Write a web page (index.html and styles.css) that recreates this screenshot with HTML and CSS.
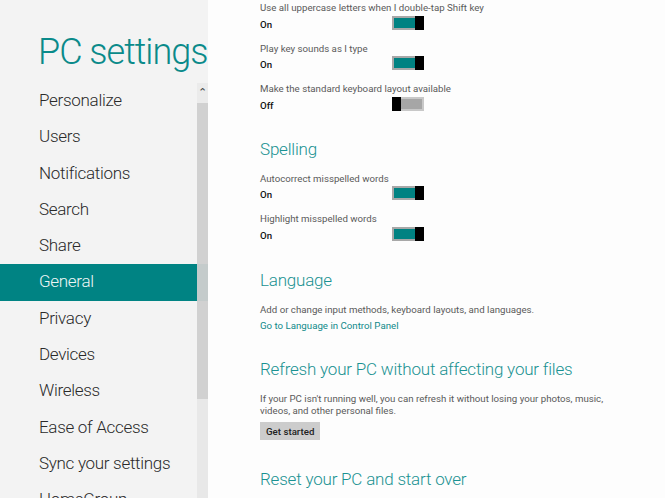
FILE: index.html
```html
<!DOCTYPE html>
<html lang="en">
<head>
    <meta charset="UTF-8">
    <meta name="viewport" content="width=device-width, initial-scale=1.0">
    <title>PC settings</title>
    <link rel="stylesheet" href="styles.css">
</head>
<body>
    <div class="sidebar">
        <h1 class="title">PC settings</h1>
        <div class="nav-wrap">
            <ul class="nav">
                <li>Personalize</li>
                <li>Users</li>
                <li>Notifications</li>
                <li>Search</li>
                <li>Share</li>
                <li class="selected">General</li>
                <li>Privacy</li>
                <li>Devices</li>
                <li>Wireless</li>
                <li>Ease of Access</li>
                <li>Sync your settings</li>
                <li>HomeGroup</li>
            </ul>
            <div class="scrollbar">
                <div class="arrow up">&#8963;</div>
                <div class="thumb"></div>
                <div class="track"></div>
                <div class="arrow down">&#8964;</div>
            </div>
        </div>
    </div>
    <div class="content">
        <div class="section settings">
            <div class="setting">
                <div class="setting-label">Use all uppercase letters when I double-tap Shift key</div>
                <div class="setting-row"><span class="state">On</span><span class="toggle on"><span class="knob"></span></span></div>
            </div>
            <div class="setting">
                <div class="setting-label">Play key sounds as I type</div>
                <div class="setting-row"><span class="state">On</span><span class="toggle on"><span class="knob"></span></span></div>
            </div>
            <div class="setting">
                <div class="setting-label">Make the standard keyboard layout available</div>
                <div class="setting-row"><span class="state">Off</span><span class="toggle off"><span class="knob"></span></span></div>
            </div>
        </div>

        <div class="section settings spelling">
            <h2 class="section-title">Spelling</h2>
            <div class="setting">
                <div class="setting-label">Autocorrect misspelled words</div>
                <div class="setting-row"><span class="state">On</span><span class="toggle on"><span class="knob"></span></span></div>
            </div>
            <div class="setting">
                <div class="setting-label">Highlight misspelled words</div>
                <div class="setting-row"><span class="state">On</span><span class="toggle on"><span class="knob"></span></span></div>
            </div>
        </div>

        <div class="section language">
            <h2 class="section-title">Language</h2>
            <p class="desc">Add or change input methods, keyboard layouts, and languages.</p>
            <a class="link" href="#">Go to Language in Control Panel</a>
        </div>

        <div class="section refresh">
            <h2 class="section-title">Refresh your PC without affecting your files</h2>
            <p class="desc">If your PC isn't running well, you can refresh it without losing your photos, music, videos, and other personal files.</p>
            <button class="btn">Get started</button>
        </div>

        <div class="section">
            <h2 class="section-title">Reset your PC and start over</h2>
        </div>
    </div>
</body>
</html>
```

FILE: styles.css
```css
body {
    margin: 0;
    padding: 0;
    display: flex;
    height: 498px;
    overflow: hidden;
    font-family: Roboto, "Open Sans", sans-serif;
    background-color: #fdfdfd;
}
.sidebar {
    width: 208px;
    flex-shrink: 0;
    background-color: #f3f3f3;
    display: flex;
    flex-direction: column;
}
.title {
    flex-shrink: 0;
    margin: 0;
    padding: 27px 0 0 38px;
    height: 56px;
    font-size: 36px;
    font-weight: 300;
    line-height: 50px;
    letter-spacing: -1px;
    color: #0a8a8a;
    white-space: nowrap;
}
.nav-wrap {
    position: relative;
    flex: 1;
}
.nav {
    list-style: none;
    margin: 0;
    padding: 0;
}
.nav li {
    height: 36.3px;
    line-height: 35px;
    padding-left: 39px;
    font-size: 17px;
    font-weight: 300;
    letter-spacing: -0.3px;
    color: #2a2a2a;
    white-space: nowrap;
}
.nav li.selected {
    background-color: #008383;
    color: #eef6f6;
}
.scrollbar {
    position: absolute;
    top: 0;
    right: 0;
    bottom: 0;
    width: 11px;
    display: flex;
    flex-direction: column;
    background-color: rgba(225, 225, 225, 0.6);
}
.scrollbar .arrow {
    height: 20px;
    font-size: 11px;
    line-height: 20px;
    text-align: center;
    color: #444;
    background-color: rgba(235, 235, 235, 0.8);
}
.scrollbar .thumb {
    height: 296px;
    background-color: rgba(205, 205, 205, 0.88);
}
.scrollbar .track {
    flex: 1;
}
.content {
    flex: 1;
    padding-left: 52px;
    color: #5a5a5a;
    font-size: 9.7px;
}
.section.settings {
    margin-bottom: 23.5px;
}
.section.spelling {
    margin-bottom: 25px;
}
.section.language {
    margin-bottom: 23px;
}
.section.refresh {
    margin-bottom: 27px;
}
.setting {
    margin-bottom: 8.5px;
}
.setting-label {
    height: 16px;
    line-height: 16px;
    white-space: nowrap;
}
.setting-row {
    display: flex;
    align-items: center;
    height: 16px;
}
.state {
    width: 132px;
    color: #111;
    font-weight: 500;
}
.toggle {
    display: flex;
    width: 30px;
    height: 10px;
    margin-top: -3px;
    border: 2px solid #a8a8a8;
}
.toggle.on {
    background-color: #008282;
    justify-content: flex-end;
    border-right: none;
}
.toggle.off {
    background-color: #a6a6a6;
    border-left: none;
    border-color: #c8c8c8;
}
.knob {
    width: 9px;
    height: 14px;
    margin-top: -2px;
    background-color: #000;
}
.section-title {
    margin: 0 0 10px;
    font-size: 17px;
    font-weight: 300;
    line-height: 24px;
    letter-spacing: -0.2px;
    color: #1a9292;
    white-space: nowrap;
}
.desc {
    margin: 0;
    padding-top: 2px;
    line-height: 12px;
    max-width: 360px;
}
.link {
    display: block;
    margin-top: 2px;
    line-height: 16px;
    color: #108a8a;
    text-decoration: none;
}
.btn {
    display: block;
    margin-top: 5px;
    padding: 0 6px;
    height: 18px;
    border: none;
    background-color: #cccccc;
    font-family: Roboto, "Open Sans", sans-serif;
    font-size: 9.7px;
    font-weight: 500;
    color: #222;
}
```
